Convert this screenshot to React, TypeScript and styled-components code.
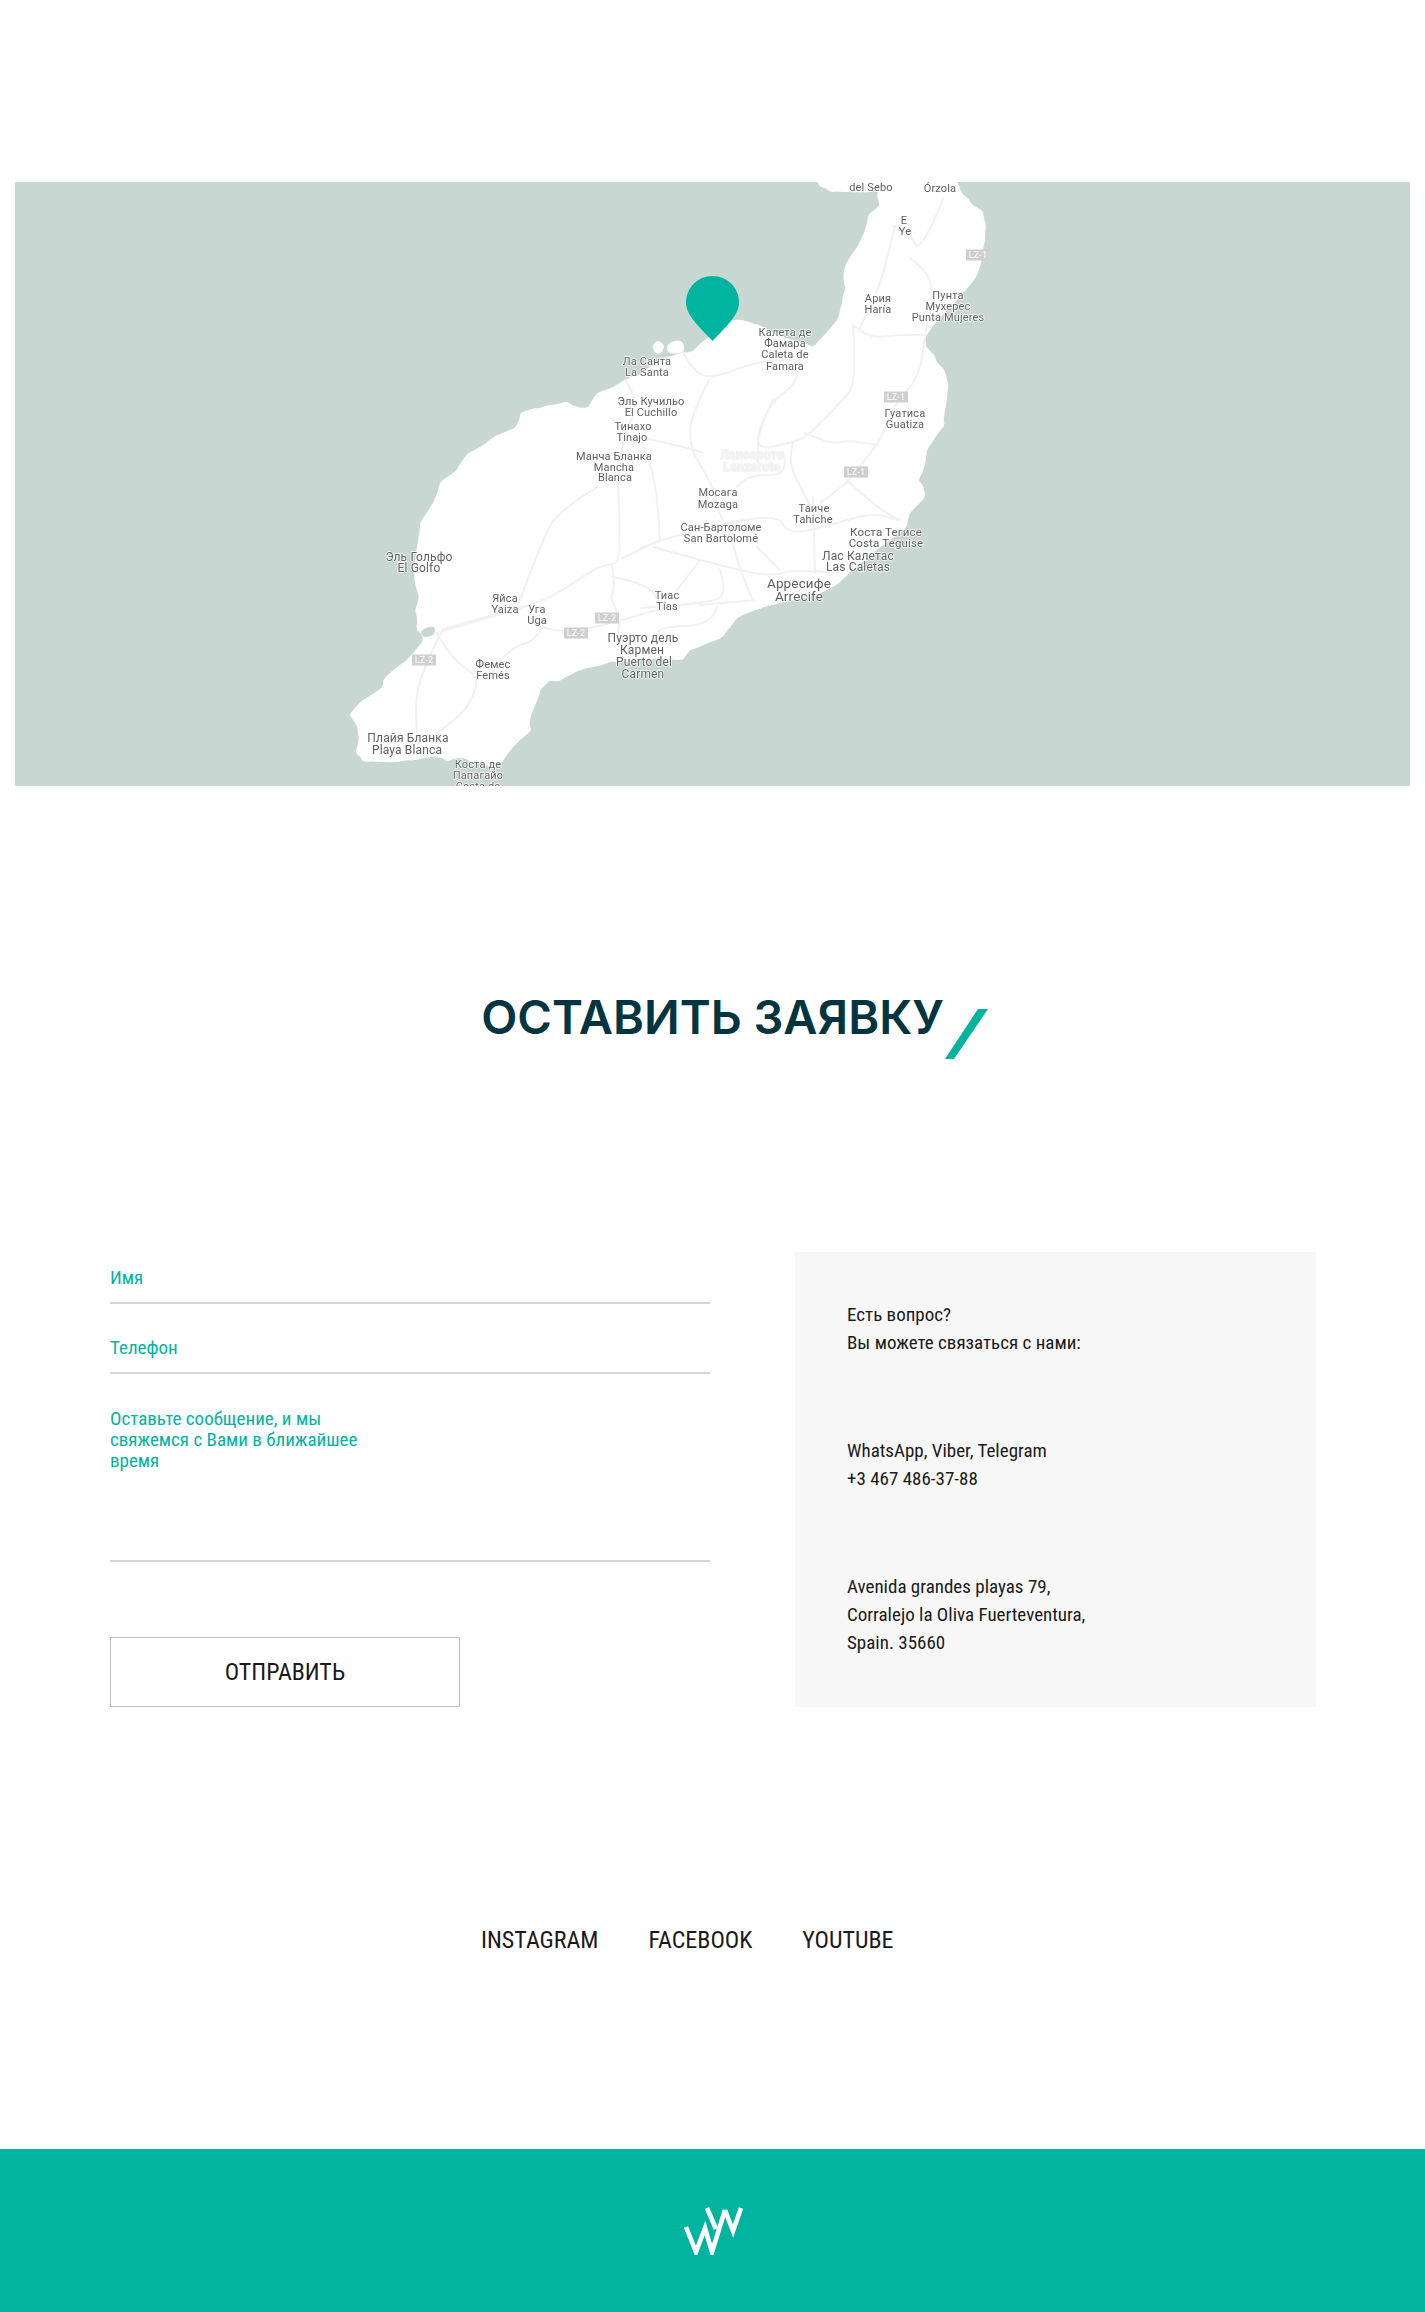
import React from "react";
import styled, { createGlobalStyle } from "styled-components";

const TEAL = "#00b4a0";
const SEA = "#c9d7d3";
const COND = `"Roboto Condensed", Roboto, "Liberation Sans", sans-serif`;

const Global = createGlobalStyle`
  html, body { margin: 0; padding: 0; background: #fff; }
  * { box-sizing: border-box; }
  #root { font-family: ${COND}; font-stretch: 75%; }
`;

const Page = styled.div`
  width: 1425px;
  height: 2312px;
  display: flex;
  flex-direction: column;
  overflow: hidden;
  padding-top: 182px;
`;

const MapFrame = styled.section`
  position: relative;
  width: 1395px;
  height: 604px;
  margin-left: 15px;
  background: ${SEA};
  overflow: hidden;
`;

const MapArt = styled.svg`
  display: block;
  width: 100%;
  height: 100%;
  filter: blur(0.45px);
`;

const Pin = styled.svg`
  position: absolute;
  left: 671px;
  top: 94px;
  width: 53px;
  height: 65px;
`;

const Land = styled.path`
  fill: #fff;
`;

const Road = styled.path<{ $w?: number }>`
  fill: none;
  stroke: #f1f1f1;
  stroke-width: ${(p) => p.$w ?? 2};
  stroke-linejoin: round;
  stroke-linecap: round;
`;

const Place = styled.text<{ $size: number }>`
  font-family: Roboto, "Liberation Sans", sans-serif;
  font-stretch: 100%;
  font-size: ${(p) => p.$size}px;
  letter-spacing: 0.15px;
  fill: #5f5f5f;
  text-anchor: middle;
  stroke: #fff;
  stroke-width: 1.4px;
  stroke-linejoin: round;
  paint-order: stroke;
`;

const Ghost = styled.text`
  font-family: Roboto, "Liberation Sans", sans-serif;
  font-stretch: 100%;
  font-size: 12px;
  font-weight: 700;
  letter-spacing: 0.4px;
  fill: #ececec;
  text-anchor: middle;
  stroke: #f2f2f2;
  stroke-width: 1.5px;
`;

const ShieldBox = styled.rect`
  fill: #cfcfcf;
`;

const ShieldText = styled.text`
  font-family: Roboto, "Liberation Sans", sans-serif;
  font-stretch: 100%;
  font-size: 9px;
  font-weight: 500;
  fill: #f4f4f4;
  text-anchor: middle;
`;

const HeadingRow = styled.div`
  display: flex;
  justify-content: center;
  margin-top: 203px;
`;

const Heading = styled.h2`
  position: relative;
  margin: 0;
  font-family: Inter, "Liberation Sans", sans-serif;
  font-stretch: 100%;
  font-weight: 600;
  font-size: 47px;
  line-height: 56px;
  color: #02353f;
  white-space: nowrap;
`;

const Slash = styled.svg`
  position: absolute;
  right: -45px;
  top: 20px;
  width: 44px;
  height: 50px;
`;

const Contact = styled.section`
  display: grid;
  grid-template-columns: 600px 521px;
  column-gap: 85px;
  margin: 207px 0 0 110px;
  height: 455px;
`;

const Form = styled.form`
  display: flex;
  flex-direction: column;
`;

const Field = styled.input`
  display: block;
  width: 100%;
  height: 52px;
  padding: 0;
  border: 0;
  border-bottom: 2px solid #d6d6d6;
  outline: 0;
  background: none;
  font: 400 19px/21px ${COND};
  font-stretch: 75%;
  color: ${TEAL};
  &::placeholder { color: ${TEAL}; opacity: 1; }
  & + & { margin-top: 18px; }
`;

const Message = styled.textarea`
  display: block;
  width: 100%;
  height: 169px;
  margin-top: 19px;
  padding: 15px 330px 0 0;
  border: 0;
  border-bottom: 2px solid #d6d6d6;
  outline: 0;
  resize: none;
  background: none;
  font: 400 19px/21px ${COND};
  font-stretch: 75%;
  color: ${TEAL};
  &::placeholder { color: ${TEAL}; opacity: 1; }
`;

const Submit = styled.button`
  width: 350px;
  height: 70px;
  margin-top: 75px;
  background: #fff;
  border: 1px solid #bfbfbf;
  font: 400 24px ${COND};
  font-stretch: 75%;
  color: #1a1a1a;
`;

const Info = styled.aside`
  display: flex;
  flex-direction: column;
  gap: 80px;
  padding: 49px 52px;
  background: #f7f7f7;
  font-size: 19px;
  line-height: 28px;
  color: #1a1a1a;
`;

const InfoBlock = styled.p`
  margin: 0;
`;

const Socials = styled.nav`
  display: flex;
  gap: 50px;
  margin: 219px 0 0 481px;
  font-size: 24px;
  line-height: 28px;
`;

const Social = styled.a`
  color: #1a1a1a;
  text-decoration: none;
`;

const Footer = styled.footer`
  margin-top: auto;
  height: 163px;
  display: flex;
  justify-content: center;
  align-items: center;
  background: ${TEAL};
`;

const Logo = styled.svg`
  width: 60px;
  height: 48px;
`;

type Pt = [number, number];
const parse = (s: string): Pt[] =>
  s.trim().split(/\s+/).map((p) => p.split(",").map(Number) as Pt);

/* rounded line through the midpoints, so the map's roads bend rather than kink */
const smooth = (pts: Pt[], closed = false): string => {
  if (pts.length < 3) return `M${pts.map((p) => p.join(" ")).join(" L")}`;
  const mid = (a: Pt, b: Pt): Pt => [(a[0] + b[0]) / 2, (a[1] + b[1]) / 2];
  if (closed) {
    let d = `M${mid(pts[pts.length - 1], pts[0]).join(" ")}`;
    pts.forEach((p, i) => {
      d += ` Q${p.join(" ")} ${mid(p, pts[(i + 1) % pts.length]).join(" ")}`;
    });
    return d + " Z";
  }
  let d = `M${pts[0].join(" ")}`;
  for (let i = 1; i < pts.length - 1; i++) {
    d += ` Q${pts[i].join(" ")} ${mid(pts[i], pts[i + 1]).join(" ")}`;
  }
  return d + ` L${pts[pts.length - 1].join(" ")}`;
};

/* breaks up a coast's long straight stretches with a small repeatable wobble */
const rough = (pts: Pt[], step = 6, amp = 2): Pt[] => {
  const out: Pt[] = [];
  let n = 0;
  pts.forEach((a, i) => {
    const b = pts[(i + 1) % pts.length];
    const len = Math.hypot(b[0] - a[0], b[1] - a[1]);
    const parts = Math.max(1, Math.round(len / step));
    for (let k = 0; k < parts; k++) {
      const t = k / parts;
      const w = k === 0 ? 0 : Math.sin(++n * 12.9898) * amp;
      out.push([
        +(a[0] + (b[0] - a[0]) * t + w).toFixed(1),
        +(a[1] + (b[1] - a[1]) * t - w * 0.8).toFixed(1),
      ]);
    }
  });
  return out;
};

const roads: [string, number?][] = [
  ["683,352 690,367 709,380 760,360 800,360"],
  ["799,362 799,382 773,400 758,433 758,460"],
  ["709,380 690,417 690,447 703,470 713,487 718,510 733,543 740,570 753,600"],
  ["640,437 690,448 703,453"],
  ["895,226 883,275 877,291 860,328"],
  ["893,226 912,236 917,250 933,225 943,198"],
  ["910,258 927,271 933,291 930,315 925,333 920,377 890,410 883,437 857,470 847,483 820,503"],
  ["853,325 867,338 897,335 923,335"],
  ["853,327 857,383 840,403 807,437 793,442 760,450 757,433 773,400"],
  ["805,433 833,445 847,440 877,445"],
  ["793,442 788,460 800,487 813,510"],
  ["783,452 790,475 750,475 737,487"],
  ["640,548 683,532 777,513 787,533 813,530 847,520 875,513 897,520"],
  ["813,497 815,573"],
  ["847,480 877,508 900,520"],
  ["653,547 700,560 767,577 793,570 840,573"],
  ["757,547 780,570"],
  ["720,570 728,595 707,603 640,608"],
  ["755,600 700,605"],
  ["717,607 712,625 660,627 657,637"],
  ["700,560 677,590"],
  ["618,485 622,560 610,565 597,567 553,597 520,608"],
  ["520,608 443,630", 3.4],
  ["443,630 437,640 415,690 417,733"],
  ["597,487 557,512 543,540 517,607"],
  ["612,565 615,587 610,598 620,617 618,633"],
  ["612,577 647,583 660,603"],
  ["660,540 623,558"],
  ["543,627 560,633 597,627 657,610"],
  ["543,627 533,642 517,645 497,663"],
  ["437,633 450,657 473,673 478,683 467,710 437,733"],
  ["625,380 640,400 622,440 618,485"],
  ["640,437 655,470 660,540"],
];

const places: [string, number, number, number?][] = [
  ["del Sebo", 871, 191], ["Órzola", 940, 192], ["E", 904, 224], ["Ye", 905, 235],
  ["Ария", 878, 302], ["Haría", 878, 313], ["Пунта", 948, 299], ["Мухерес", 948, 310],
  ["Punta Mujeres", 948, 321], ["Калета де", 785, 336], ["Фамара", 785, 347],
  ["Caleta de", 785, 358], ["Famara", 785, 370], ["Ла Санта", 647, 365], ["La Santa", 647, 376],
  ["Эль Кучильо", 651, 405], ["El Cuchillo", 651, 416], ["Тинахо", 633, 430], ["Tinajo", 632, 441],
  ["Манча Бланка", 614, 460], ["Mancha", 614, 471], ["Blanca", 615, 481],
  ["Гуатиса", 905, 417], ["Guatiza", 905, 428], ["Мосага", 718, 496], ["Mozaga", 718, 508],
  ["Таиче", 814, 512], ["Tahiche", 813, 523], ["Сан-Бартоломе", 721, 531], ["San Bartolomé", 721, 542],
  ["Коста Тегисе", 886, 536, 11.5], ["Costa Teguise", 886, 547, 11.5], ["Лас Калетас", 858, 560, 12], ["Las Caletas", 858, 571, 12],
  ["Арресифе", 799, 588, 13.5], ["Arrecife", 799, 601, 13.5], ["Тиас", 667, 599], ["Tías", 667, 610],
  ["Эль Гольфо", 419, 561, 12], ["El Golfo", 419, 572, 12], ["Яйса", 505, 602], ["Yaiza", 505, 613],
  ["Уга", 537, 613], ["Uga", 537, 624], ["Фемес", 493, 668], ["Femés", 493, 679],
  ["Плайя Бланка", 408, 742, 12], ["Playa Blanca", 407, 754, 12], ["Коста де", 478, 768], ["Папагайо", 478, 779],
  ["Costa de", 478, 790], ["Пуэрто дель", 643, 642, 12], ["Кармен", 642, 654, 12], ["Puerto del", 644, 666, 12], ["Carmen", 643, 678, 12],
];

const shields: [string, number, number][] = [
  ["LZ-1", 978, 255], ["LZ-1", 896, 397], ["LZ-1", 856, 472],
  ["LZ-2", 607, 618], ["LZ-2", 576, 633], ["LZ-2", 424, 660],
];

const ISLAND = parse(
  "812,180 957,180 968,198 983,211 986,225 982,251 977,275 970,285 953,305 937,321 925,338 926,347 937,363 947,380 947,397 945,425 927,450 923,470 918,480 925,497 910,513 907,527 873,553 850,572 837,585 823,592 773,605 757,610 737,618 723,637 710,642 690,650 683,660 613,661 580,670 558,682 550,680 540,690 530,720 532,730 517,743 507,755 502,763 490,767 470,762 455,758 447,762 437,757 407,760 363,762 355,753 358,733 349,715 360,702 383,687 383,680 393,670 407,660 423,640 416,630 415,610 419,597 415,583 418,542 420,522 435,498 440,482 457,470 468,453 483,445 495,436 503,433 515,428 520,413 540,408 567,401 588,408 597,393 612,388 625,380 640,375 660,358 683,352 693,351 703,341 733,320 760,325 780,333 813,347 837,320 842,303 846,288 845,266 860,241 868,215 880,205 878,190 850,192 830,192 820,187"
);

const ISLET = parse("651,347 658,339 666,347 658,356");
const CAPE = parse("667,343 682,339 686,353 667,354");
const LAGOON = parse("420,630 435,625 435,635 423,638");

export default function App() {
  return (
    <Page>
      <Global />
      <MapFrame>
        <MapArt viewBox="15 182 1395 604" aria-label="Карта Лансароте">
          <Land d={smooth(rough(ISLAND), true)} />
          <Land d={smooth(ISLET, true)} />
          <Land d={smooth(CAPE, true)} />
          <path d={smooth(LAGOON, true)} fill={SEA} />
          {roads.map(([pts, w]) => (
            <Road key={pts} d={smooth(parse(pts))} $w={w} />
          ))}
          <Ghost x={752} y={459}>Лансароте</Ghost>
          <Ghost x={752} y={471}>Lanzarote</Ghost>
          {shields.map(([t, x, y]) => (
            <g key={`${x}-${y}`}>
              <ShieldBox x={x - 12} y={y - 5.5} width={24} height={11} />
              <ShieldText x={x} y={y + 3.2}>{t}</ShieldText>
            </g>
          ))}
          {places.map(([t, x, y, size]) => (
            <Place key={t} x={x} y={y} $size={size ?? 11}>{t}</Place>
          ))}
        </MapArt>
        <Pin viewBox="0 0 54 66">
          <path d="M27 0C12 0 0 12 0 27c0 11 9 21 27 39C45 48 54 38 54 27 54 12 42 0 27 0Z" fill={TEAL} />
        </Pin>
      </MapFrame>

      <HeadingRow>
        <Heading>
          ОСТАВИТЬ ЗАЯВКУ
          <Slash viewBox="0 0 44 50">
            <polygon points="33,0 43,0 9,50 0,50" fill={TEAL} />
          </Slash>
        </Heading>
      </HeadingRow>

      <Contact>
        <Form>
          <Field placeholder="Имя" />
          <Field placeholder="Телефон" />
          <Message placeholder="Оставьте сообщение, и мы свяжемся с Вами в ближайшее время" />
          <Submit type="button">ОТПРАВИТЬ</Submit>
        </Form>
        <Info>
          <InfoBlock>Есть вопрос?<br />Вы можете связаться с нами:</InfoBlock>
          <InfoBlock>WhatsApp, Viber, Telegram<br />+3 467 486-37-88</InfoBlock>
          <InfoBlock>Avenida grandes playas 79,<br />Corralejo la Oliva Fuerteventura,<br />Spain. 35660</InfoBlock>
        </Info>
      </Contact>

      <Socials>
        <Social href="#">INSTAGRAM</Social>
        <Social href="#">FACEBOOK</Social>
        <Social href="#">YOUTUBE</Social>
      </Socials>

      <Footer>
        <Logo viewBox="0 0 60 48">
          <g fill="none" stroke="#fff" strokeWidth="4.6" strokeLinejoin="miter">
            <polyline points="3,20 13,45 22,21 29,45 42,3" />
            <polyline points="24,1 33,22" />
            <polyline points="42,3 50,24 58,1" />
          </g>
        </Logo>
      </Footer>
    </Page>
  );
}
